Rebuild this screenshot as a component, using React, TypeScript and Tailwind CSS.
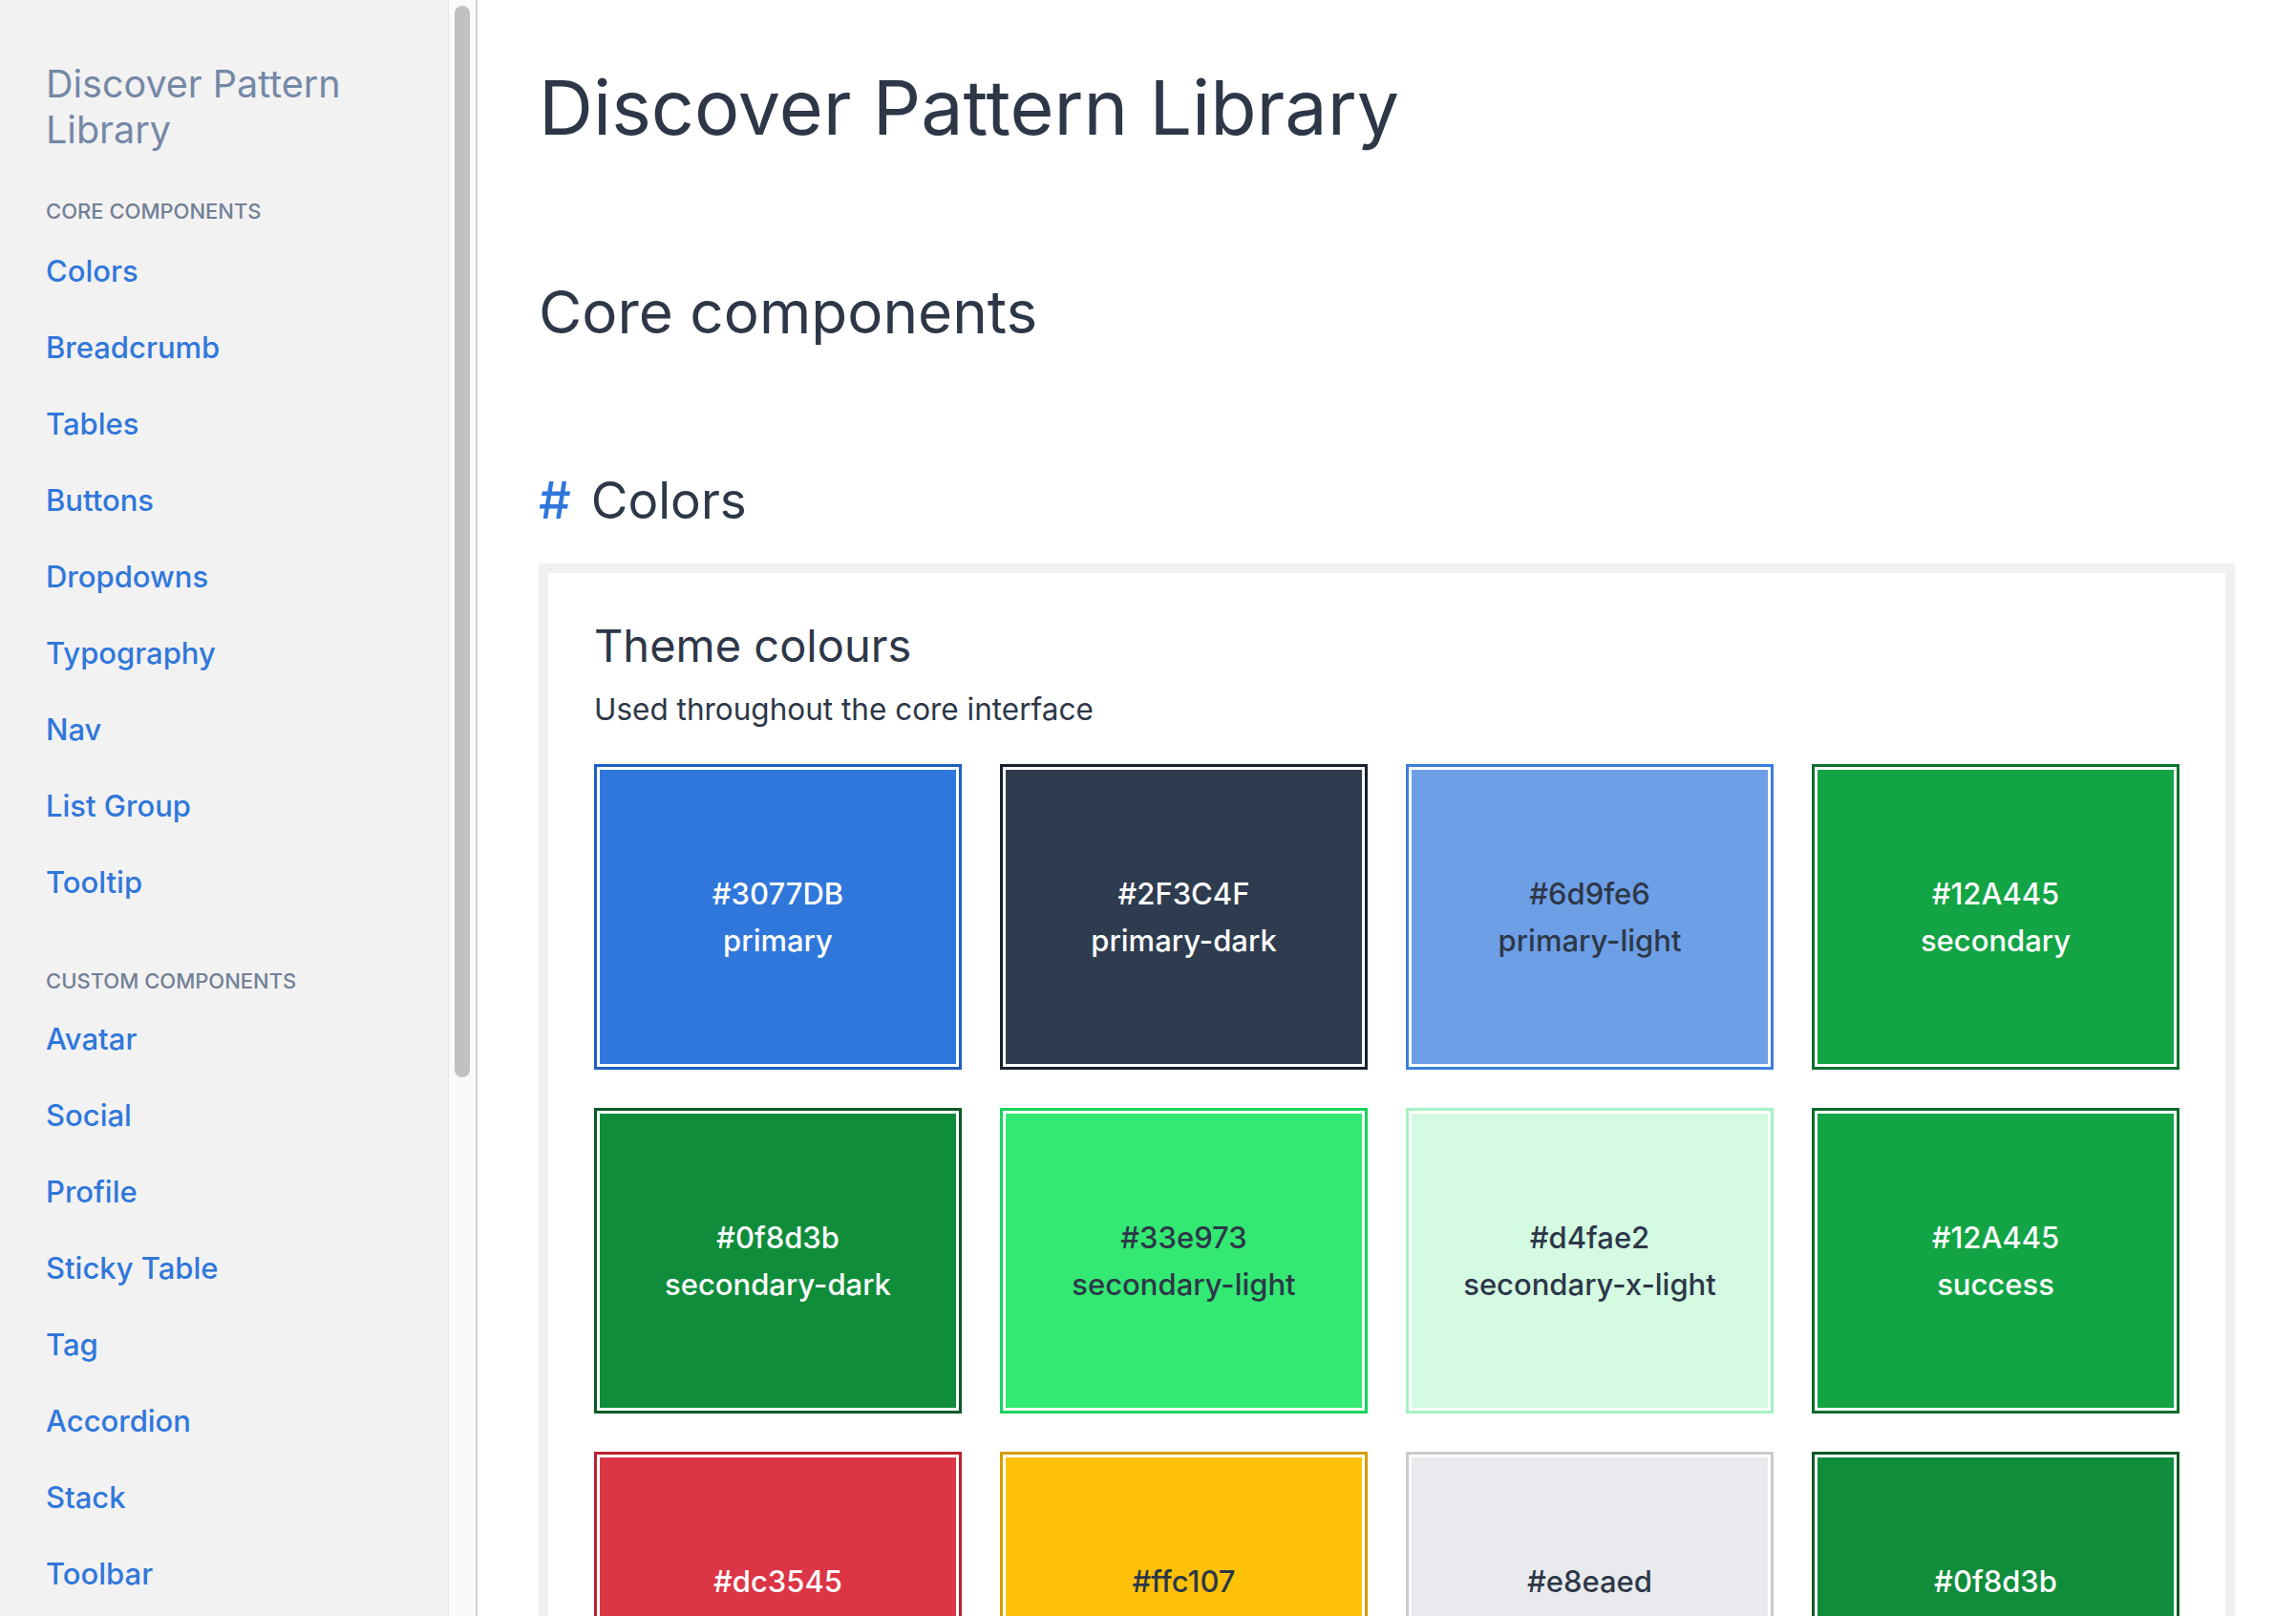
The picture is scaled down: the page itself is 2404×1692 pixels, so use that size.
import React from "react";

type Swatch = { hex: string; name: string; bg: string; border: string; text: string };

const swatches: Swatch[] = [
  { hex: "#3077DB", name: "primary", bg: "bg-[#3077DB]", border: "border-[#1f5fc0]", text: "text-white" },
  { hex: "#2F3C4F", name: "primary-dark", bg: "bg-[#2F3C4F]", border: "border-[#1a202c]", text: "text-white" },
  { hex: "#6d9fe6", name: "primary-light", bg: "bg-[#6d9fe6]", border: "border-[#3c7edc]", text: "text-[#2d3748]" },
  { hex: "#12A445", name: "secondary", bg: "bg-[#12A445]", border: "border-[#0b7030]", text: "text-white" },
  { hex: "#0f8d3b", name: "secondary-dark", bg: "bg-[#0f8d3b]", border: "border-[#0a5a26]", text: "text-white" },
  { hex: "#33e973", name: "secondary-light", bg: "bg-[#33e973]", border: "border-[#16d45b]", text: "text-[#2d3748]" },
  { hex: "#d4fae2", name: "secondary-x-light", bg: "bg-[#d4fae2]", border: "border-[#a6f2c2]", text: "text-[#2d3748]" },
  { hex: "#12A445", name: "success", bg: "bg-[#12A445]", border: "border-[#0b6b2c]", text: "text-white" },
  { hex: "#dc3545", name: "danger", bg: "bg-[#dc3545]", border: "border-[#bd2130]", text: "text-white" },
  { hex: "#ffc107", name: "warning", bg: "bg-[#ffc107]", border: "border-[#d39e00]", text: "text-[#2d3748]" },
  { hex: "#e8eaed", name: "light", bg: "bg-[#e8eaed]", border: "border-[#c8cbd0]", text: "text-[#2d3748]" },
  { hex: "#0f8d3b", name: "dark", bg: "bg-[#0f8d3b]", border: "border-[#0a5a26]", text: "text-white" },
];

const core = ["Colors", "Breadcrumb", "Tables", "Buttons", "Dropdowns", "Typography", "Nav", "List Group", "Tooltip"];
const custom = ["Avatar", "Social", "Profile", "Sticky Table", "Tag", "Accordion", "Stack", "Toolbar"];

function NavItem({ label }: { label: string }) {
  return (
    <a href="#" className="flex h-[80px] items-center text-[31px] font-medium text-[#3077DB]">
      {label}
    </a>
  );
}

export default function App() {
  return (
    <div className="flex h-[1692px] w-[2404px] overflow-hidden bg-white font-['Inter',sans-serif] text-[#2d3748]">
      {/* Sidebar */}
      <aside className="flex h-full w-[500px] shrink-0 bg-[#f2f2f2]">
        <div className="w-[469px] shrink-0 px-[48px] pt-[64px]">
          <div className="text-[39.5px] leading-[48px] text-[#7488a6]">
            Discover Pattern
            <br />
            Library
          </div>
          <div className="mt-[46px] text-[22px] font-medium uppercase leading-[30px] text-[#718096]">
            Core components
          </div>
          <nav className="mt-[8px] flex flex-col">
            {core.map((c) => (
              <NavItem key={c} label={c} />
            ))}
          </nav>
          <div className="mt-[48px] text-[22px] font-medium uppercase leading-[30px] text-[#718096]">
            Custom components
          </div>
          <nav className="mt-[6px] flex flex-col">
            {custom.map((c) => (
              <NavItem key={c} label={c} />
            ))}
          </nav>
        </div>
        <div className="h-full w-[31px] shrink-0 border-l border-r-2 border-l-[#e6e6e6] border-r-[#cfcfcf] bg-[#fafafa] pt-[6px]">
          <div className="ml-[6px] h-[1122px] w-[16px] rounded-full bg-[#c1c1c1]" />
        </div>
      </aside>

      {/* Main */}
      <main className="min-w-0 flex-1 px-[64px] pt-[64px]">
        <h1 className="text-[79px] font-normal leading-[96px] text-[#2d3748]">Discover Pattern Library</h1>
        <h2 className="mt-[130px] text-[62px] font-normal leading-[74px] text-[#2d3748]">Core components</h2>
        <h3 className="mt-[129px] text-[53px] font-normal leading-[62px] text-[#2d3748]">
          <span className="mr-[6px] font-medium text-[#3077DB]">#</span> Colors
        </h3>
        <section className="mt-[35px] border-[10px] border-[#f0f0f0] bg-white p-[48px]">
          <h4 className="text-[47px] font-normal leading-[56px]">Theme colours</h4>
          <p className="mt-[16px] text-[31.5px] leading-[46px]">Used throughout the core interface</p>
          <div className="mt-[34px] grid grid-cols-4 gap-[40px]">
            {swatches.map((s, i) => (
              <div key={i} className={`h-[320px] border-[3px] bg-white p-[3px] ${s.border}`}>
                <div
                  className={`flex h-full flex-col items-center justify-center text-[31px] font-medium leading-[49px] ${s.bg} ${s.text}`}
                >
                  <span>{s.hex}</span>
                  <span>{s.name}</span>
                </div>
              </div>
            ))}
          </div>
        </section>
      </main>
    </div>
  );
}
